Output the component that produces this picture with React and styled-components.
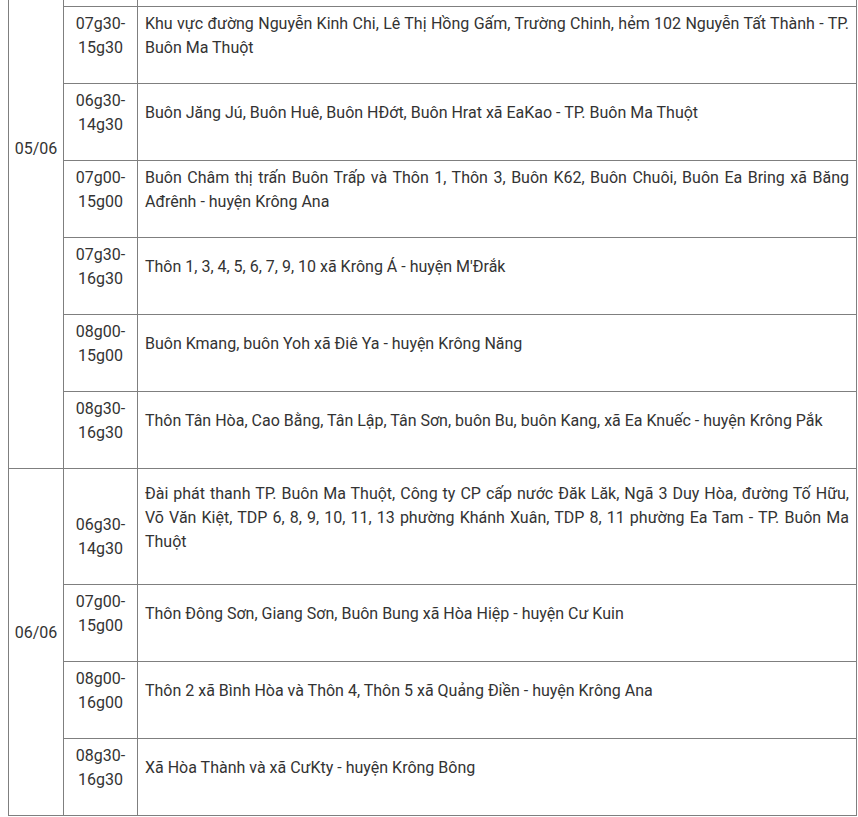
import React from 'react';
import styled, { createGlobalStyle } from 'styled-components';

const GlobalStyle = createGlobalStyle`
  body {
    margin: 0;
    background: #fff;
  }
`;

const Page = styled.div`
  padding: 0 1px 0 8px;
  font-family: Roboto, "Liberation Sans", sans-serif;
  font-size: 16px;
  line-height: 24px;
  color: #333;
`;

const Table = styled.table`
  width: 100%;
  border-collapse: collapse;
  table-layout: fixed;
`;

const Col = styled.col`
  width: ${p => p.$w ? `${p.$w}px` : 'auto'};
`;

const Cell = styled.td`
  border: 1px solid #7f7f7f;
  padding: 5px 7px;
  height: ${p => p.$h ? `${p.$h}px` : 'auto'};
  text-align: ${p => p.$align || 'justify'};
  vertical-align: ${p => p.$valign || 'middle'};

  p {
    margin: 0 0 18px;
  }
`;

const DateCell = styled(Cell)`
  text-align: center;
  padding: ${p => p.$offset ? `${p.$offset}px 4px 5px` : '5px 4px'};
  vertical-align: ${p => p.$offset ? 'top' : 'middle'};
  border-top: ${p => p.$open ? 'none' : '1px solid #7f7f7f'};
`;

const TailCell = styled.td`
  border: 1px solid #7f7f7f;
  border-top: none;
  padding: 0;
  height: 6px;
`;

const groups = [
  {
    date: '05/06',
    open: true,
    offset: 137,
    rows: [
      ['07g30-', '15g30', 'Khu vực đường Nguyễn Kinh Chi, Lê Thị Hồng Gấm, Trường Chinh, hẻm 102 Nguyễn Tất Thành - TP. Buôn Ma Thuột'],
      ['06g30-', '14g30', 'Buôn Jăng Jú, Buôn Huê, Buôn HĐớt, Buôn Hrat xã EaKao - TP. Buôn Ma Thuột'],
      ['07g00-', '15g00', 'Buôn Châm thị trấn Buôn Trấp và Thôn 1, Thôn 3, Buôn K62, Buôn Chuôi, Buôn Ea Bring xã Băng Ađrênh - huyện Krông Ana'],
      ['07g30-', '16g30', 'Thôn 1, 3, 4, 5, 6, 7, 9, 10 xã Krông Á - huyện M\'Đrắk'],
      ['08g00-', '15g00', 'Buôn Kmang, buôn Yoh xã Điê Ya - huyện Krông Năng'],
      ['08g30-', '16g30', 'Thôn Tân Hòa, Cao Bằng, Tân Lập, Tân Sơn, buôn Bu, buôn Kang, xã Ea Knuếc - huyện Krông Pắk'],
    ],
  },
  {
    date: '06/06',
    rows: [
      ['06g30-', '14g30', 'Đài phát thanh TP. Buôn Ma Thuột, Công ty CP cấp nước Đăk Lăk, Ngã 3 Duy Hòa, đường Tố Hữu, Võ Văn Kiệt, TDP 6, 8, 9, 10, 11, 13 phường Khánh Xuân, TDP 8, 11 phường Ea Tam - TP. Buôn Ma Thuột', 105],
      ['07g00-', '15g00', 'Thôn Đông Sơn, Giang Sơn, Buôn Bung xã Hòa Hiệp - huyện Cư Kuin'],
      ['08g00-', '16g00', 'Thôn 2 xã Bình Hòa và Thôn 4, Thôn 5 xã Quảng Điền - huyện Krông Ana'],
      ['08g30-', '16g30', 'Xã Hòa Thành và xã CưKty - huyện Krông Bông'],
    ],
  },
];

export default function App() {
  return (
    <Page>
      <GlobalStyle />
      <Table>
        <colgroup>
          <Col $w={55} />
          <Col $w={74} />
          <Col />
        </colgroup>
        <tbody>
          {groups.map(g => (
            <React.Fragment key={g.date}>
              {g.open && (
                <tr>
                  <DateCell rowSpan={g.rows.length + 1} $open $offset={g.offset}>
                    <p>{g.date}</p>
                  </DateCell>
                  <TailCell />
                  <TailCell />
                </tr>
              )}
              {g.rows.map((r, i) => (
                <tr key={r[0] + r[2]}>
                  {!g.open && i === 0 && (
                    <DateCell rowSpan={g.rows.length}>
                      <p>{g.date}</p>
                    </DateCell>
                  )}
                  <Cell $align="center" $valign="bottom" $h={r[3]}>
                    <p>{r[0]}<br />{r[1]}</p>
                  </Cell>
                  <Cell $h={r[3]}>
                    <p>{r[2]}</p>
                  </Cell>
                </tr>
              ))}
            </React.Fragment>
          ))}
        </tbody>
      </Table>
    </Page>
  );
}
